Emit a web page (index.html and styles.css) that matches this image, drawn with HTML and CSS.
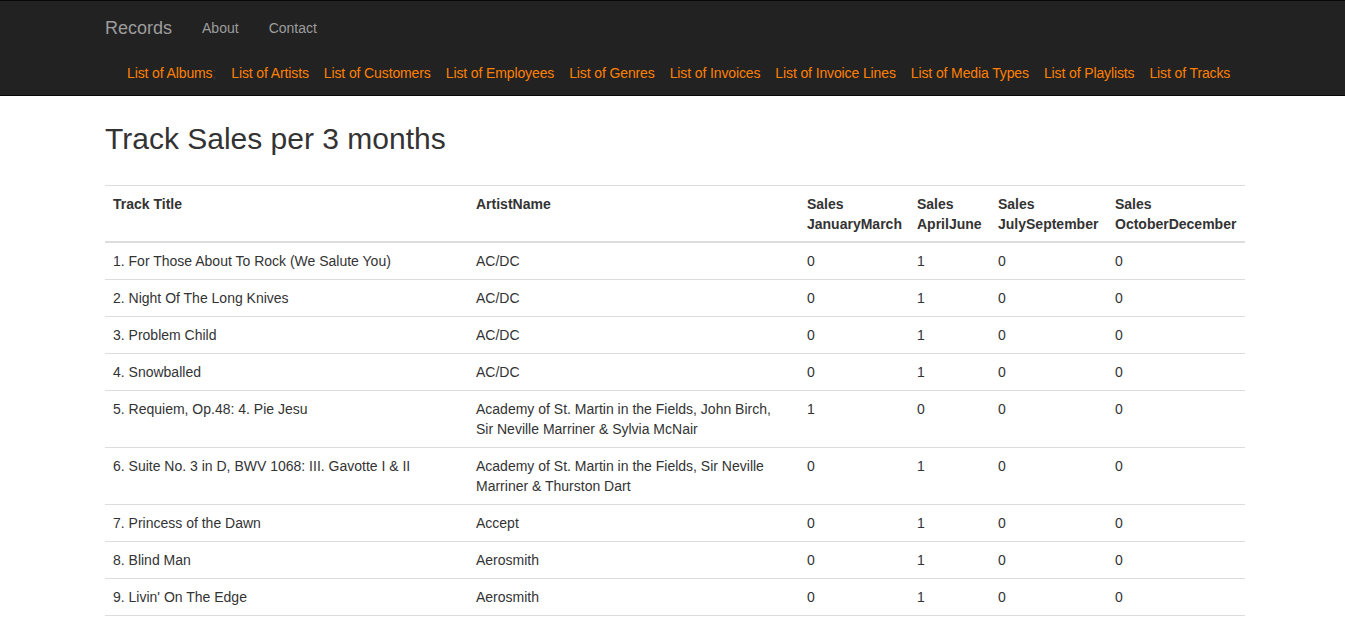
FILE: index.html
```html
<!DOCTYPE html>
<html lang="en">
<head>
<meta charset="utf-8">
<title>Track Sales per 3 months</title>
<link rel="stylesheet" href="styles.css">
</head>
<body>
<nav class="navbar">
  <div class="container">
    <div class="nav-top">
      <a class="brand" href="#">Records</a>
      <a class="nav-link" href="#">About</a>
      <a class="nav-link" href="#">Contact</a>
    </div>
    <div class="subnav">
      <a href="#">List of Albums<span class="dim">;</span></a>
      <a href="#">List of Artists</a>
      <a href="#">List of Customers</a>
      <a href="#">List of Employees</a>
      <a href="#">List of Genres</a>
      <a href="#">List of Invoices</a>
      <a href="#">List of Invoice Lines</a>
      <a href="#">List of Media Types</a>
      <a href="#">List of Playlists</a>
      <a href="#">List of Tracks</a>
    </div>
  </div>
</nav>
<main class="container">
  <h2 class="title">Track Sales per 3 months</h2>
  <table class="table">
    <colgroup>
      <col class="c1"><col class="c2"><col class="c3"><col class="c4"><col class="c5"><col class="c6">
    </colgroup>
    <thead>
      <tr>
        <th>Track Title</th>
        <th>ArtistName</th>
        <th>Sales JanuaryMarch</th>
        <th>Sales AprilJune</th>
        <th>Sales JulySeptember</th>
        <th>Sales OctoberDecember</th>
      </tr>
    </thead>
    <tbody>
      <tr><td>1. For Those About To Rock (We Salute You)</td><td>AC/DC</td><td>0</td><td>1</td><td>0</td><td>0</td></tr>
      <tr><td>2. Night Of The Long Knives</td><td>AC/DC</td><td>0</td><td>1</td><td>0</td><td>0</td></tr>
      <tr><td>3. Problem Child</td><td>AC/DC</td><td>0</td><td>1</td><td>0</td><td>0</td></tr>
      <tr><td>4. Snowballed</td><td>AC/DC</td><td>0</td><td>1</td><td>0</td><td>0</td></tr>
      <tr><td>5. Requiem, Op.48: 4. Pie Jesu</td><td>Academy of St. Martin in the Fields, John Birch, Sir Neville Marriner &amp; Sylvia McNair</td><td>1</td><td>0</td><td>0</td><td>0</td></tr>
      <tr><td>6. Suite No. 3 in D, BWV 1068: III. Gavotte I &amp; II</td><td>Academy of St. Martin in the Fields, Sir Neville Marriner &amp; Thurston Dart</td><td>0</td><td>1</td><td>0</td><td>0</td></tr>
      <tr><td>7. Princess of the Dawn</td><td>Accept</td><td>0</td><td>1</td><td>0</td><td>0</td></tr>
      <tr><td>8. Blind Man</td><td>Aerosmith</td><td>0</td><td>1</td><td>0</td><td>0</td></tr>
      <tr><td>9. Livin' On The Edge</td><td>Aerosmith</td><td>0</td><td>1</td><td>0</td><td>0</td></tr>
    </tbody>
  </table>
</main>
</body>
</html>
```
FILE: styles.css
```css
* { box-sizing: border-box; }
html, body { margin: 0; padding: 0; }
body {
  font-family: "Liberation Sans", Arial, Helvetica, sans-serif;
  font-size: 14px;
  line-height: 20px;
  color: #333;
  background: #fff;
}
a { text-decoration: none; }
.container {
  width: 1140px;
  margin-left: 105px;
}
.navbar {
  background: #222;
  border-top: 1px solid #080808;
  border-bottom: 1px solid #080808;
}
.nav-top {
  display: flex;
  align-items: center;
  height: 50px;
  padding-top: 3px;
}
.brand {
  font-size: 18px;
  line-height: 20px;
  color: #9d9d9d;
  padding: 15px 15px 15px 0;
}
.nav-link {
  color: #9d9d9d;
  padding: 15px;
}
.subnav {
  display: flex;
  gap: 15px;
  padding: 12px 0 12px 22px;
  white-space: nowrap;
  letter-spacing: -0.12px;
}
.subnav a {
  flex: none;
  color: #ff8000;
}
.subnav .dim {
  color: #3a3a3a;
}
.title {
  font-size: 30px;
  font-weight: 500;
  line-height: 33px;
  margin: 26px 0 30px;
}
.table {
  width: 1140px;
  border-collapse: collapse;
  table-layout: fixed;
}
.c1 { width: 363px; }
.c2 { width: 331px; }
.c3 { width: 110px; }
.c4 { width: 81px; }
.c5 { width: 117px; }
.c6 { width: 138px; }
.table th, .table td {
  padding: 8px;
  text-align: left;
  vertical-align: top;
  border-top: 1px solid #ddd;
}
.table th {
  font-weight: bold;
  padding-bottom: 7px;
  border-bottom: 2px solid #ddd;
}
.table tbody tr:last-child td {
  border-bottom: 1px solid #ddd;
}
```
